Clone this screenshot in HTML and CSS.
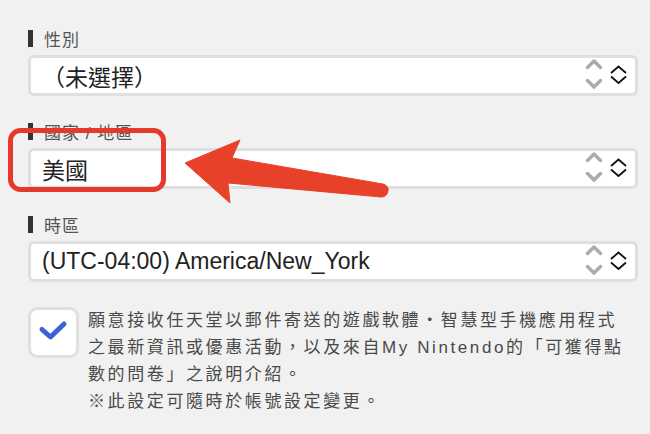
FILE: index.html
```html
<!DOCTYPE html>
<html lang="zh-Hant">
<head>
<meta charset="utf-8">
<link rel="stylesheet" href="styles.css">
</head>
<body>
<div class="page">
  <div class="field">
    <div class="label"><span class="bar"></span><span>性別</span></div>
    <div class="select">
      <span class="value">（未選擇）</span>
      <svg class="arrows" width="46" height="35" viewBox="0 0 46 35">
        <path d="M4.5 9.5 L11 3 L17.5 9.5" class="gray"/>
        <path d="M4.5 22.5 L11 29 L17.5 22.5" class="gray"/>
        <path d="M28 15 L35.5 8.5 L43 15" class="black"/>
        <path d="M28 18.5 L35.5 25 L43 18.5" class="black"/>
      </svg>
    </div>
  </div>
  <div class="field">
    <div class="label"><span class="bar"></span><span>國家 / 地區</span></div>
    <div class="select">
      <span class="value">美國</span>
      <svg class="arrows" width="46" height="35" viewBox="0 0 46 35">
        <path d="M4.5 9.5 L11 3 L17.5 9.5" class="gray"/>
        <path d="M4.5 22.5 L11 29 L17.5 22.5" class="gray"/>
        <path d="M28 15 L35.5 8.5 L43 15" class="black"/>
        <path d="M28 18.5 L35.5 25 L43 18.5" class="black"/>
      </svg>
    </div>
  </div>
  <div class="field">
    <div class="label"><span class="bar"></span><span>時區</span></div>
    <div class="select">
      <span class="value">(UTC-04:00) America/New_York</span>
      <svg class="arrows" width="46" height="35" viewBox="0 0 46 35">
        <path d="M4.5 9.5 L11 3 L17.5 9.5" class="gray"/>
        <path d="M4.5 22.5 L11 29 L17.5 22.5" class="gray"/>
        <path d="M28 15 L35.5 8.5 L43 15" class="black"/>
        <path d="M28 18.5 L35.5 25 L43 18.5" class="black"/>
      </svg>
    </div>
  </div>
  <div class="consent">
    <div class="checkbox">
      <svg width="45" height="45" viewBox="0 0 45 45">
        <path d="M11 19.5 L19.5 27 L33 14" class="check"/>
      </svg>
    </div>
    <p class="text">願意接收任天堂以郵件寄送的遊戲軟體・智慧型手機應用程式<br>之最新資訊或優惠活動，以及來自My Nintendo的「可獲得點<br>數的問卷」之說明介紹。<br>※此設定可隨時於帳號設定變更。</p>
  </div>
</div>
<svg class="annotation" width="650" height="434" viewBox="0 0 650 434">
  <rect x="10.5" y="130.5" width="153" height="59" rx="10" ry="10" class="box"/>
  <path d="M185 163 L240 140 L232 158 L383 184 Q389 186 388 191 Q387 197 381 197 L228 183 L230 203 Z" class="arrow"/>
</svg>
</body>
</html>
```

FILE: styles.css
```css
html, body {
  margin: 0;
  padding: 0;
  background: #f1f1f1;
}

body {
  width: 650px;
  height: 434px;
  overflow: hidden;
  position: relative;
  font-family: "Liberation Sans", "Noto Sans CJK TC", sans-serif;
}

.page {
  padding: 29px 12px 0 28px;
}

.field {
  margin-bottom: 26px;
}

.label {
  display: flex;
  align-items: center;
  height: 18px;
  font-size: 17px;
  letter-spacing: 1px;
  color: #555;
  margin-bottom: 8px;
}

.bar {
  width: 5px;
  height: 17px;
  background: #333;
  margin-right: 11px;
}

.select {
  box-sizing: border-box;
  height: 41px;
  border: 3px solid #dfdfdf;
  border-radius: 6px;
  background: #fff;
  display: flex;
  align-items: center;
  padding-left: 11px;
}

.value {
  flex: 1;
  font-size: 23px;
  color: #222;
  white-space: nowrap;
}

.arrows {
  flex: none;
  margin-right: 6px;
}

.arrows path {
  fill: none;
  stroke-linecap: round;
  stroke-linejoin: round;
}

.arrows .gray {
  stroke: #ababab;
  stroke-width: 3.5;
}

.arrows .black {
  stroke: #111;
  stroke-width: 1.8;
  stroke-linecap: butt;
  stroke-linejoin: miter;
}

.consent {
  display: flex;
  align-items: flex-start;
  margin-top: -1px;
}

.checkbox {
  box-sizing: border-box;
  width: 51px;
  height: 51px;
  border: 3px solid #e0e0e0;
  border-radius: 9px;
  background: #fff;
  flex: none;
  display: flex;
  align-items: center;
  justify-content: center;
  margin-right: 9px;
}

.check {
  fill: none;
  stroke: #3b63d6;
  stroke-width: 5;
  stroke-linecap: round;
  stroke-linejoin: round;
}

.text {
  margin: 0;
  font-size: 17px;
  line-height: 27px;
  letter-spacing: 2.6px;
  color: #4a4a4a;
  white-space: nowrap;
}

.annotation {
  position: absolute;
  left: 0;
  top: 0;
  pointer-events: none;
}

.annotation .box {
  fill: none;
  stroke: #e5392b;
  stroke-width: 5;
}

.annotation .arrow {
  fill: #e8412a;
  stroke: #e8412a;
  stroke-width: 1;
  stroke-linejoin: round;
}
```
